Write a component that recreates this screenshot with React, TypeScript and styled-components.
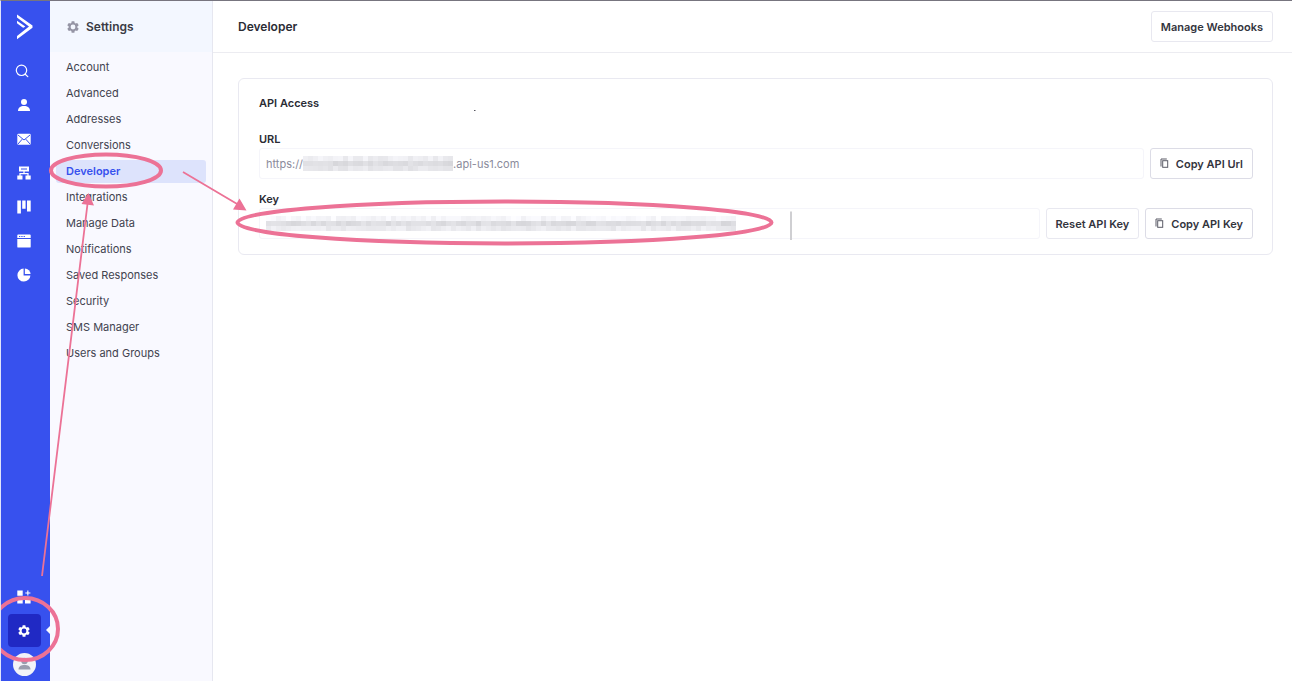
import React from "react";
import styled, { createGlobalStyle, css } from "styled-components";

const pink = "#ec7296";
const font = `Inter, Roboto, "Liberation Sans", sans-serif`;

const GlobalStyle = createGlobalStyle`
  *, *::before, *::after { box-sizing: border-box; }
  body { margin: 0; background: #fff; color: #3a3b45; font: 11px/16px ${font}; }
  button, input { font: inherit; }
`;

const Page = styled.div`
  position: relative;
  display: flex;
  min-height: 100vh;
  border-top: 1px solid #77757f;
  border-left: 1px solid #dfe3fb;
  overflow: hidden;
`;

const Rail = styled.nav`
  display: flex;
  flex-direction: column;
  align-items: center;
  flex: 0 0 49px;
  background: #3751ee;
  padding: 11px 3px 0 0;
`;

const RailLink = styled.a<{ $active?: boolean }>`
  position: relative;
  display: grid;
  place-items: center;
  width: 33px;
  height: 34px;
  color: #fff;
  border-radius: 4px;
  svg { display: block; }
  ${(p) =>
    p.$active &&
    css`
      height: 33px;
      background: #2029c4;
      &::after {
        content: "";
        position: absolute;
        right: -10px;
        top: 11px;
        border: 5px solid transparent;
        border-left: 0;
        border-right-color: #f9f9ff;
      }
    `}
`;

const LogoLink = styled(RailLink)`
  height: 30px;
  margin-bottom: 12px;
`;

const RailBottom = styled.div`
  display: flex;
  flex-direction: column;
  align-items: center;
  margin-top: auto;
  padding-bottom: 5px;
`;

const Avatar = styled.a`
  display: block;
  width: 23px;
  height: 23px;
  margin-top: 6px;
  border-radius: 50%;
  background: #f1f2f8;
  overflow: hidden;
`;

const Sidebar = styled.aside`
  flex: 0 0 163px;
  background: #f9f9ff;
  border-right: 1px solid #e6e7f0;
`;

const SidebarHeader = styled.header`
  display: flex;
  align-items: center;
  gap: 7px;
  height: 51px;
  padding: 0 17px;
  background: #f3f7ff;
  color: #9595a5;
`;

const SidebarTitle = styled.h2`
  margin: 0;
  font-size: 12px;
  line-height: 20px;
  font-weight: 600;
  color: #3a3b45;
`;

const Menu = styled.ul`
  list-style: none;
  margin: 0;
  padding: 4px 6px;
  display: flex;
  flex-direction: column;
  gap: 3px;
`;

const MenuLink = styled.a<{ $active?: boolean }>`
  display: block;
  padding: 0 10px;
  line-height: 23px;
  border-radius: 3px;
  text-decoration: none;
  color: ${(p) => (p.$active ? "#3751ee" : "#42434f")};
  background: ${(p) => (p.$active ? "#dde3fc" : "transparent")};
  font-weight: ${(p) => (p.$active ? 600 : 400)};
`;

const Main = styled.main`
  flex: 1;
  min-width: 0;
`;

const TopBar = styled.header`
  display: flex;
  align-items: center;
  justify-content: space-between;
  height: 52px;
  padding: 0 19px 0 25px;
  border-bottom: 1px solid #ececf1;
`;

const Title = styled.h1`
  margin: 0;
  font-size: 12px;
  line-height: 20px;
  font-weight: 600;
  color: #2b2c35;
`;

const Button = styled.button<{ $strong?: boolean }>`
  display: flex;
  align-items: center;
  gap: 7px;
  height: 31px;
  padding: 0 9px;
  border: 1px solid ${(p) => (p.$strong ? "#dcdce6" : "#e8e8f0")};
  border-radius: 3px;
  background: #fff;
  color: #33343d;
  font-weight: 600;
  white-space: nowrap;
`;

const Card = styled.section`
  margin: 25px 19px 0 25px;
  padding: 16px 19px 15px 20px;
  border: 1px solid #e9e9f1;
  border-radius: 6px;
`;

const CardTitle = styled.h3`
  margin: 0 0 20px;
  font-size: 11px;
  line-height: 16px;
  font-weight: 600;
  color: #2b2c35;
`;

const Label = styled.label`
  display: block;
  line-height: 16px;
  margin-bottom: 1px;
  font-weight: 600;
  color: #2b2c35;
`;

const FieldRow = styled.div`
  display: flex;
  gap: 6px;
  & + ${Label} { margin-top: 12px; }
`;

const Field = styled.div`
  display: flex;
  align-items: center;
  flex: 1;
  min-width: 0;
  height: 31px;
  padding: 0 6px;
  border: 1px solid #f5f5fa;
  border-radius: 3px;
  color: #8b8b9b;
`;

const Input = styled.input`
  flex: 1;
  min-width: 0;
  padding: 0;
  border: 0;
  outline: 0;
  background: transparent;
  color: inherit;
`;

const Annotations = styled.svg`
  position: absolute;
  left: -1px;
  top: -1px;
  pointer-events: none;
`;

const CELL = 5;

function Mosaic({ width, height, seed, tones }: { width: number; height: number; seed: number; tones: number[] }) {
  const cells: React.ReactNode[] = [];
  let s = seed;
  for (let y = 0, r = 0; y < height; y += CELL, r++) {
    for (let x = 0; x < width; x += CELL) {
      s = (s * 1103515245 + 12345) % 2147483648;
      const v = Math.round(tones[r] + (s / 2147483648 - 0.5) * 14);
      cells.push(
        <rect key={`${x}-${y}`} x={x} y={y} width={CELL} height={CELL} fill={`rgb(${v},${v},${Math.min(255, v + 4)})`} />
      );
    }
  }
  return (
    <svg width={width} height={height} shapeRendering="crispEdges" aria-hidden="true">
      {cells}
    </svg>
  );
}

const GEAR =
  "M19.14 12.94c.04-.3.06-.61.06-.94s-.02-.64-.07-.94l2.03-1.58a.5.5 0 0 0 .12-.61l-1.92-3.32a.5.5 0 0 0-.59-.22l-2.39.96a7 7 0 0 0-1.62-.94l-.36-2.54a.48.48 0 0 0-.48-.41h-3.84a.47.47 0 0 0-.47.41l-.36 2.54a7.4 7.4 0 0 0-1.62.94l-2.39-.96a.47.47 0 0 0-.59.22L2.74 8.87a.47.47 0 0 0 .12.61l2.03 1.58a6 6 0 0 0 0 1.88l-2.03 1.58a.5.5 0 0 0-.12.61l1.92 3.32c.12.22.37.29.59.22l2.39-.96c.5.38 1.03.7 1.62.94l.36 2.54c.05.24.24.41.48.41h3.84c.24 0 .44-.17.47-.41l.36-2.54a7.4 7.4 0 0 0 1.62-.94l2.39.96c.22.08.47 0 .59-.22l1.92-3.32a.47.47 0 0 0-.12-.61zM12 16a4 4 0 1 1 0-8 4 4 0 0 1 0 8z";

const Gear = () => (
  <svg width="12" height="12" viewBox="2 2 20 20" fill="currentColor" aria-hidden="true">
    <path d={GEAR} />
  </svg>
);

const CopyIcon = () => (
  <svg width="9" height="11" viewBox="0 0 9 11" fill="none" stroke="#5a5b66" aria-hidden="true">
    <path d="M1 8.5V1H6.8" strokeWidth="1" />
    <rect x="2.7" y="2.7" width="5" height="6.6" strokeWidth="1" />
  </svg>
);

const icon = (children: React.ReactNode) => (
  <svg width="14" height="14" viewBox="0 0 14 14" fill="currentColor" aria-hidden="true">
    {children}
  </svg>
);

const railItems: { name: string; art: React.ReactNode }[] = [
  {
    name: "Search",
    art: (
      <svg width="18" height="14" viewBox="0 0 18 14" fill="none" stroke="#fff" strokeWidth="1.2" strokeLinecap="round" aria-hidden="true">
        <circle cx="6.5" cy="6.3" r="5.2" />
        <path d="M10.2 10.2L12.8 12.6" />
      </svg>
    ),
  },
  {
    name: "Contacts",
    art: icon(
      <>
        <circle cx="7" cy="4" r="3" />
        <path d="M1 13C1 9.6 3.4 8 7 8s6 1.6 6 5z" />
      </>
    ),
  },
  {
    name: "Campaigns",
    art: icon(
      <>
        <rect x="0.3" y="1.8" width="13.4" height="11" rx="1.2" />
        <path d="M1 3L7 8L13 3M1 12L5.2 7.2M13 12L8.8 7.2" fill="none" stroke="#3751ee" strokeWidth="1" />
      </>
    ),
  },
  {
    name: "Automations",
    art: icon(
      <>
        <path d="M2 0.5h10v5H2zM0.3 9.5h5.2v4H0.3zM8.5 9.5h5.2v4H8.5z" />
        <path d="M7 5v3M3 10V7.7h8V10" fill="none" stroke="currentColor" strokeWidth="1.2" />
        <path d="M4 3h6" stroke="#3751ee" strokeWidth="1" />
      </>
    ),
  },
  {
    name: "Deals",
    art: icon(<path d="M0.3 0.5h3.6v13H0.3zM5.2 0.5h3.4v8.3H5.2zM10 0.5h3.7v11H10z" />),
  },
  {
    name: "Website",
    art: icon(
      <>
        <path d="M1.2 0.4h11.6a0.9 0.9 0 0 1 0.9 0.9V4H0.3V1.3a0.9 0.9 0 0 1 0.9-0.9zM0.3 5h13.4v7.7a0.9 0.9 0 0 1-0.9 0.9H1.2a0.9 0.9 0 0 1-0.9-0.9z" />
        <path d="M2 2.5h1.3M4.3 2.5h1.3M6.6 2.5h1.3" stroke="#3751ee" strokeWidth="1.1" />
      </>
    ),
  },
  {
    name: "Reports",
    art: icon(
      <>
        <path d="M6.6 0.6V7.4H13.4A6.5 6.5 0 1 1 6.6 0.6z" />
        <path d="M7.9 0.4A6 6 0 0 1 13.6 6.1H7.9z" />
      </>
    ),
  },
];

const menu = [
  "Account",
  "Advanced",
  "Addresses",
  "Conversions",
  "Developer",
  "Integrations",
  "Manage Data",
  "Notifications",
  "Saved Responses",
  "Security",
  "SMS Manager",
  "Users and Groups",
];

export default function App() {
  return (
    <Page>
      <GlobalStyle />
      <Rail aria-label="Main">
        <LogoLink href="#home" aria-label="Home">
          <svg width="18" height="26" viewBox="0 0 18 26" fill="#fff" aria-hidden="true">
            <path d="M2 0.5V3.600L14 12.600L2 22V25.200L17.500 13.800V11.500z" />
            <path d="M2 6.800V9.300L7.300 13.200C8.200 13.900 9 13.800 10.300 12.600z" />
          </svg>
        </LogoLink>
        {railItems.map((i) => (
          <RailLink key={i.name} href={`#${i.name.toLowerCase()}`} aria-label={i.name}>
            {i.art}
          </RailLink>
        ))}
        <RailBottom>
          <RailLink href="#apps" aria-label="Apps">
            {icon(<path d="M0.3 0.4h5.4v5.4H0.3zM0.3 8h5.4v5.6H0.3zM8 8h5.6v5.6H8zM10.3 0.5h1.1v2h2v1.1h-2v2h-1.1v-2h-2V2.5h2z" />)}
          </RailLink>
          <RailLink href="#settings" aria-label="Settings" $active>
            <Gear />
          </RailLink>
          <Avatar href="#profile" aria-label="Profile">
            <svg width="23" height="23" viewBox="0 0 23 23" fill="#9a9dae" aria-hidden="true">
              <circle cx="11.5" cy="8" r="3.2" />
              <path d="M5.5 16.5C5.5 13.4 8 12 11.5 12s6 1.4 6 4.5z" />
            </svg>
          </Avatar>
        </RailBottom>
      </Rail>

      <Sidebar>
        <SidebarHeader>
          <Gear />
          <SidebarTitle>Settings</SidebarTitle>
        </SidebarHeader>
        <Menu>
          {menu.map((m) => (
            <li key={m}>
              <MenuLink href="#" $active={m === "Developer"}>
                {m}
              </MenuLink>
            </li>
          ))}
        </Menu>
      </Sidebar>

      <Main>
        <TopBar>
          <Title>Developer</Title>
          <Button type="button">Manage Webhooks</Button>
        </TopBar>
        <Card>
          <CardTitle>API Access</CardTitle>
          <Label htmlFor="api-url">URL</Label>
          <FieldRow>
            <Field>
              <span>https://</span>
              <Mosaic width={150} height={15} seed={7} tones={[238, 221, 231]} />
              <Input id="api-url" readOnly defaultValue=".api-us1.com" />
            </Field>
            <Button type="button" $strong>
              <CopyIcon />
              Copy API Url
            </Button>
          </FieldRow>
          <Label htmlFor="api-key">Key</Label>
          <FieldRow>
            <Field>
              <Mosaic width={470} height={15} seed={31} tones={[246, 221, 235]} />
              <Input id="api-key" readOnly defaultValue="" />
            </Field>
            <Button type="button">Reset API Key</Button>
            <Button type="button" $strong>
              <CopyIcon />
              Copy API Key
            </Button>
          </FieldRow>
        </Card>
      </Main>

      <Annotations width="800" height="681" viewBox="0 0 800 681" fill="none" stroke={pink} aria-hidden="true">
        <ellipse cx="106" cy="170.500" rx="55" ry="16" strokeWidth="4" />
        <ellipse cx="504.500" cy="222.500" rx="267" ry="21" strokeWidth="4" />
        <ellipse cx="25" cy="629" rx="33" ry="31" strokeWidth="4" />
        <path d="M183 172L238 204.500M42 576L87.500 204" strokeWidth="1.800" />
        <path d="M246.500 210.500L233 209.500L239.500 198.500zM88.500 193L94 205.500L81.500 204z" fill={pink} stroke="none" />
        <path d="M791 211.500V240" stroke="#cfcfd2" strokeWidth="2" />
        <rect x="474" y="110" width="1.500" height="1" fill="#55555f" stroke="none" />
      </Annotations>
    </Page>
  );
}
